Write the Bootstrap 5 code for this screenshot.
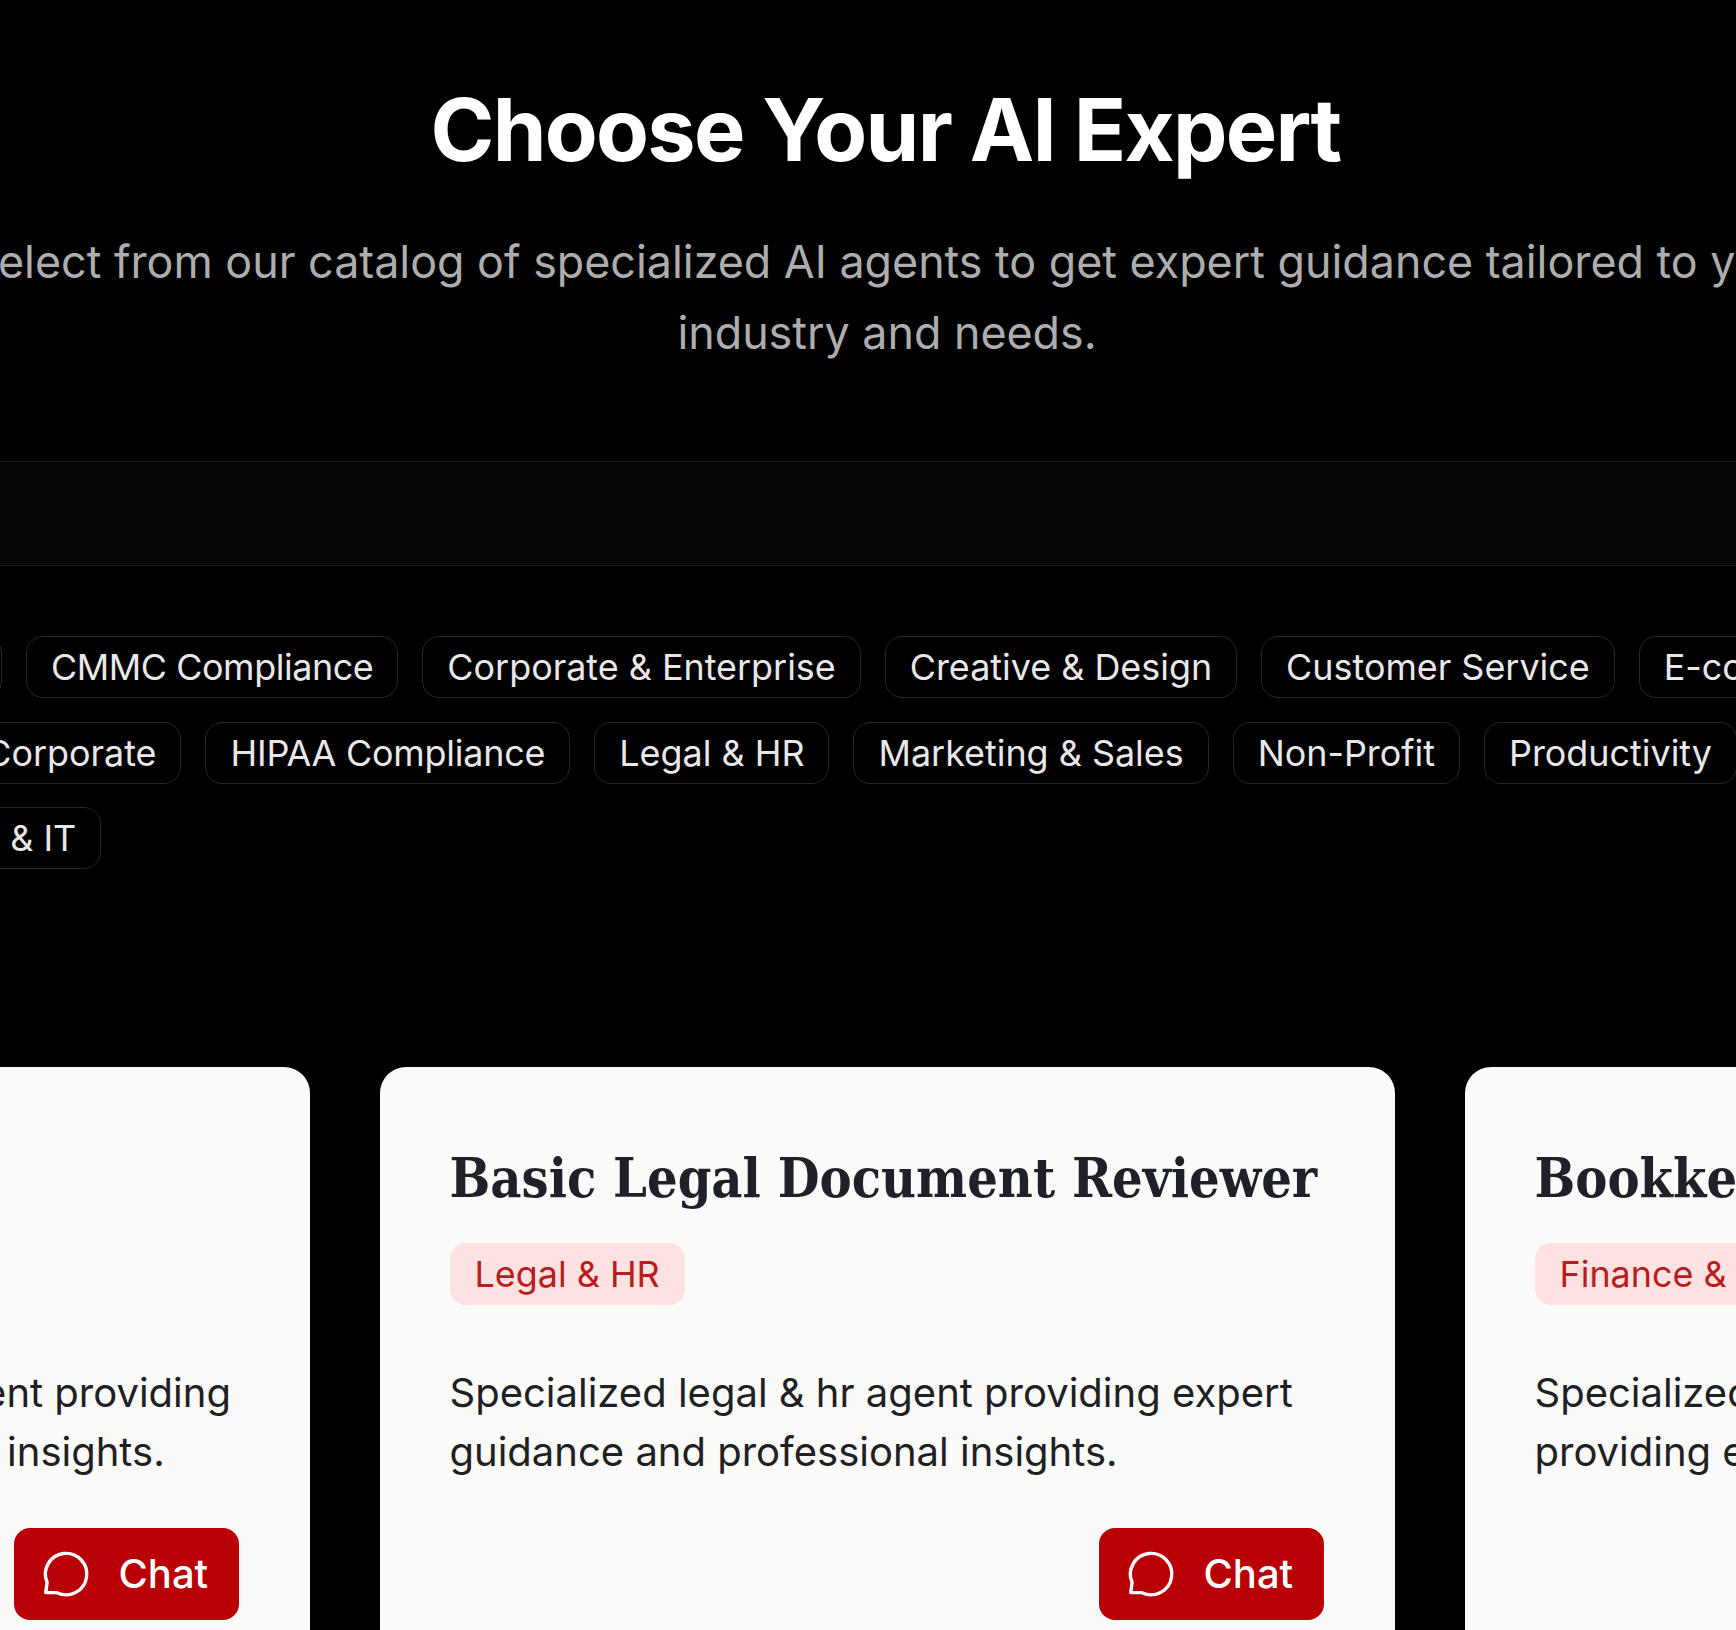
<!DOCTYPE html>
<html lang="en">
<head>
<meta charset="utf-8">
<title>Choose Your AI Expert</title>
<link href="https://cdn.jsdelivr.net/npm/bootstrap@5.3.0/dist/css/bootstrap.min.css" rel="stylesheet">
<style>
html, body { background: #000; margin: 0; overflow: hidden; height: 1630px; }
body { font-family: Inter, "Liberation Sans", sans-serif; color: #fff; }
.stage { width: 2208px; margin-left: -217px; }
.hero-head { padding-top: 82px; height: 461px; }
.hero-title { font-family: Inter, sans-serif; font-weight: 700; font-size: 86.4px; line-height: 96px; letter-spacing: -0.02em; margin: 0 0 49px; padding-right: 3px; color: #fff; }
.hero-sub { font-size: 44.8px; line-height: 71px; color: #adadad; width: 2000px; margin: 0 auto; }
.search-band { height: 105px; background: #060606; border-top: 1px solid #1c1c1c; border-bottom: 1px solid #1c1c1c; margin-left: 217px; width: 1736px; }
.tag-wrap { padding-top: 70px; column-gap: 24px; row-gap: 23.6px; }
.tag-pill { height: 62px; line-height: 60px; padding: 0 24px; font-size: 35.9px; border: 1px solid #26262b; border-radius: 17px; color: #e8e8e8; white-space: nowrap; }
.tag-caps { letter-spacing: -0.42px; }
.tag-tight { letter-spacing: -0.2px; }
.tag-word { letter-spacing: -0.6px; }
.agent-row { gap: 70px; margin-top: 198px; }
.agent-card { width: 1015px; height: 700px; flex: none; background: #fafaf8; border-radius: 26px; padding: 78px 70px 71px; }
.agent-title { font-family: "DejaVu Serif Condensed", "DejaVu Serif", serif; font-weight: 700; font-size: 53.6px; line-height: 68px; color: #1f2128; margin: 0 0 30px; white-space: nowrap; }
.agent-badge { display: inline-block; height: 62px; line-height: 63px; padding: 0 25px; background: #fee2e2; color: #b91c1c; border-radius: 16px; font-size: 35.9px; }
.agent-desc { font-size: 40px; line-height: 58.5px; color: #1f2024; margin: 59px 0 0; display: -webkit-box; -webkit-line-clamp: 2; -webkit-box-orient: vertical; overflow: hidden; }
.chat-btn { background: #b90006; color: #fff; border: 0; border-radius: 16px; width: 225px; height: 92px; font-size: 40px; font-weight: 500; gap: 26px; padding: 0 0 0 25px; }
.chat-btn:hover { background: #b90006; color: #fff; }
.chat-line { margin-top: 47px; margin-right: 1px; }
</style>
</head>
<body>
<div class="stage">
  <div class="hero-head text-center">
    <h1 class="hero-title">Choose Your AI Expert</h1>
    <p class="hero-sub">Select from our catalog of specialized AI agents to get expert guidance tailored to your industry and needs.</p>
  </div>
  <div class="search-band"></div>
  <div class="tag-wrap d-flex flex-wrap">
    <span class="tag-pill">Education</span>
    <span class="tag-pill tag-caps">CMMC Compliance</span>
    <span class="tag-pill">Corporate &amp; Enterprise</span>
    <span class="tag-pill">Creative &amp; Design</span>
    <span class="tag-pill">Customer Service</span>
    <span class="tag-pill">E-commerce</span>
    <span class="tag-pill">Finance &amp; Corporate</span>
    <span class="tag-pill tag-tight">HIPAA Compliance</span>
    <span class="tag-pill">Legal &amp; HR</span>
    <span class="tag-pill">Marketing &amp; Sales</span>
    <span class="tag-pill">Non-Profit</span>
    <span class="tag-pill">Productivity</span>
    <span class="tag-pill"><span class="tag-word">Technology</span> &amp; IT</span>
  </div>
  <div class="agent-row d-flex justify-content-center">
    <div class="agent-card">
      <h3 class="agent-title">Financial Planner</h3>
      <span class="agent-badge">Business</span>
      <p class="agent-desc">Specialized financial planning agent providing expert guidance and professional insights.</p>
      <div class="chat-line d-flex justify-content-end"><button class="chat-btn btn d-flex align-items-center"><svg width="54" height="54" viewBox="0 0 24 24" fill="none" stroke="currentColor" stroke-width="1.5" stroke-linecap="round" stroke-linejoin="round"><path d="M3 20.2 3.6 15.7A9.2 9.2 0 1 1 8 20.3Z"/></svg>Chat</button></div>
    </div>
    <div class="agent-card">
      <h3 class="agent-title">Basic Legal Document Reviewer</h3>
      <span class="agent-badge">Legal &amp; HR</span>
      <p class="agent-desc">Specialized legal &amp; hr agent providing expert guidance and professional insights.</p>
      <div class="chat-line d-flex justify-content-end"><button class="chat-btn btn d-flex align-items-center"><svg width="54" height="54" viewBox="0 0 24 24" fill="none" stroke="currentColor" stroke-width="1.5" stroke-linecap="round" stroke-linejoin="round"><path d="M3 20.2 3.6 15.7A9.2 9.2 0 1 1 8 20.3Z"/></svg>Chat</button></div>
    </div>
    <div class="agent-card">
      <h3 class="agent-title">Bookkeeping Assistant</h3>
      <span class="agent-badge">Finance &amp; Accounting</span>
      <p class="agent-desc">Specialized finance &amp; accounting agent providing expert guidance and professional insights.</p>
      <div class="chat-line d-flex justify-content-end"><button class="chat-btn btn d-flex align-items-center"><svg width="54" height="54" viewBox="0 0 24 24" fill="none" stroke="currentColor" stroke-width="1.5" stroke-linecap="round" stroke-linejoin="round"><path d="M3 20.2 3.6 15.7A9.2 9.2 0 1 1 8 20.3Z"/></svg>Chat</button></div>
    </div>
  </div>
</div>
</body>
</html>
